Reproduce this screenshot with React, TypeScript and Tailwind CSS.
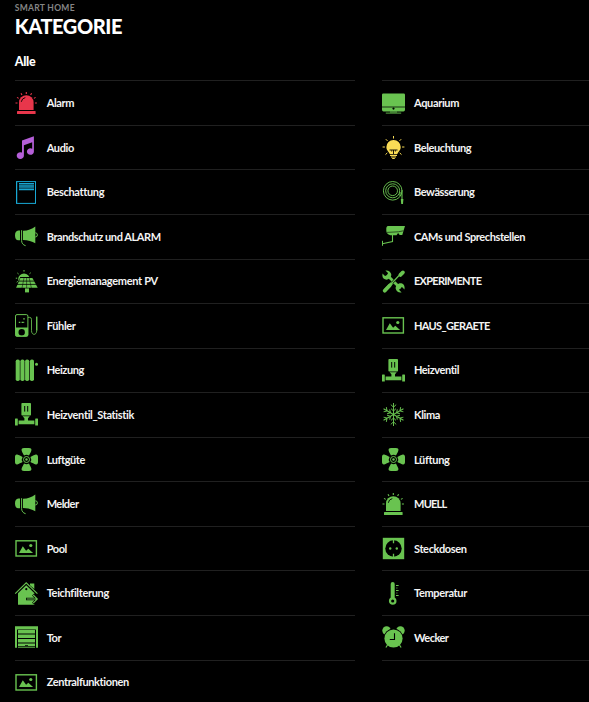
import type { ReactNode } from "react";

type Category = {
  name: string;
  icon: ReactNode;
  color?: string;
  tracking?: string;
};

const BG = "#000";

const Siren = () => (
  <>
    <path d="M4 18V10.5a7.3 7.3 0 0 1 14.6 0V18z" fill="currentColor" />
    <path d="M6.3 9.8a5 5 0 0 1 4-4.2" fill="none" stroke={BG} strokeWidth=".9" />
    <rect x="2" y="19" width="18.6" height="3" rx=".6" fill="currentColor" />
    <path
      d="M11.3 0v2M6 1.2l1 1.8M16.6 1.2l-1 1.8M2 5.4l1.7 1M20.6 5.4l-1.7 1M.5 11h2M19.9 11h2"
      stroke="currentColor"
      strokeWidth="1.1"
    />
  </>
);

const Note = () => (
  <path
    d="M7 4.6 18.9.2v15.2a3.5 3.3 0 1 1-1.7-2.7V6.2L8.9 9.2v10.2a3.6 3.4 0 1 1-1.9-2.8z"
    fill="currentColor"
  />
);

const Blind = () => (
  <>
    <rect x="1.5" y=".6" width="19" height="21.8" fill="none" stroke="currentColor" />
    <path d="M2.7 1v21" stroke="currentColor" strokeWidth=".6" opacity=".5" />
    <path d="M4 2.7h15M4 5h15M4 8.6h15" stroke="currentColor" strokeWidth="1.5" />
    <path d="M4 6.8h15" stroke="currentColor" strokeWidth="1.5" opacity=".7" />
  </>
);

const Megaphone = () => (
  <>
    <path d="M5 5.6v9.6H3.4C1 15.2 0 13 0 10.4s1-4.8 3.4-4.8z" fill="currentColor" />
    <path d="M6.6 5.2v10.4c.1 2.6 1.4 4.4 4 5.1" fill="none" stroke="currentColor" strokeWidth="1" />
    <path d="M8 5.8c5 0 9-2 12.3-4.4v16.8C17 16.4 13 15 8 15z" fill="currentColor" />
    <path d="M20.3 7.8a2 2 0 0 1 0 4.2" fill="none" stroke="currentColor" strokeWidth="1" />
  </>
);

const Solar = () => (
  <>
    <path d="M3.6 11.6a5.6 5.6 0 1 1 10.8-4.5H5.2z" fill="currentColor" />
    <path
      d="M9 0v1.6M2.4 3l1.2 1M15.7 2.8l-1.2 1M.8 8.2h1.4M1.7 12.2l1.1-.8"
      stroke="currentColor"
    />
    <path d="M5.4 8h12l5.3 9.8H1.1z" fill="currentColor" />
    <path d="M3.4 11.1h16M2 14.4h19.6" stroke={BG} strokeWidth=".8" />
    <path d="M9 8 7 18M14.2 8l2.2 10M11.6 8v10" stroke={BG} strokeWidth=".5" />
    <path d="M10 18.4h4v4h-4z" fill="currentColor" />
  </>
);

const Sensor = () => (
  <>
    <rect x=".5" y=".6" width="12.4" height="21.7" rx="1.5" fill="none" stroke="currentColor" />
    <path
      d="M.3 13.6h12.8v7.3q0 1.7-1.7 1.7H2Q.3 22.6.3 20.9zM6.7 15a3.2 3.2 0 1 0 0 6.4 3.2 3.2 0 0 0 0-6.4"
      fill="currentColor"
    />
    <path d="M3.8 8.4h1.5M6.6 8.4H8M8.2 4.8h1.6M8.2 8.4h1" stroke="currentColor" strokeWidth="1.2" />
    <path
      d="M13 3.4h1.7q1.8 0 1.8 2v11.2c0 5 5.2 5 5.2 0V3"
      fill="none"
      stroke="currentColor"
      strokeWidth=".85"
    />
    <path d="M21.7 2.5v14" stroke="currentColor" strokeWidth="1.3" />
  </>
);

const Radiator = () => (
  <g fill="currentColor">
    <rect x=".7" y=".5" width="4.1" height="21.6" rx="1.8" />
    <rect x="5.4" y=".5" width="4.1" height="21.6" rx="1.8" />
    <rect x="10.1" y=".5" width="4.1" height="21.6" rx="1.8" />
    <rect x="14.9" y=".5" width="4.1" height="21.6" rx="1.8" />
    <circle cx="21.5" cy="5.3" r="1.5" />
  </g>
);

const Valve = () => (
  <>
    <rect x="6.4" y="0" width="9.6" height="12.6" rx=".8" fill="currentColor" />
    <path d="M9.7 3v5.6M12.7 3v5.6" stroke={BG} strokeWidth="1" />
    <path d="M7.6 13.2h7.2l-1.8 2v2.2h6.4v3.8H3.6v-3.8h5.8v-2.2z" fill="currentColor" />
    <rect x="0" y="15.6" width="2.8" height="7" rx=".4" fill="currentColor" />
    <rect x="20.2" y="15.6" width="2.8" height="7" rx=".4" fill="currentColor" />
  </>
);

const Fan = () => (
  <>
    <g fill="currentColor">
      {[0, 90, 180, 270].map((angle) => (
        <path
          key={angle}
          transform={`rotate(${angle} 11.5 11.5)`}
          d="M6.6 2.2C6.4.8 7.4 0 9 0h5c1.7 0 2.7.8 2.4 2.2-.4 1.9-1.6 3.5-2.4 5.4Q11.5 6 9 7.6C8.2 5.7 7 4.1 6.6 2.2"
        />
      ))}
    </g>
    <circle cx="11.5" cy="11.5" r="3" fill="none" stroke="currentColor" />
    <circle cx="11.5" cy="11.5" r="1.2" fill="currentColor" />
  </>
);

const Picture = () => (
  <>
    <rect x="1" y="3.8" width="20.4" height="15.2" fill="none" stroke="currentColor" strokeWidth="1.4" />
    <path d="m4 16 3.8-6.7 3.3 4.4 2.2-2 4.8 4.3z" fill="currentColor" />
    <circle cx="15.8" cy="8.5" r="1.6" fill="currentColor" />
  </>
);

const House = () => (
  <>
    <path d="m.2 11.6 11-10.8L22.4 11.6" fill="none" stroke="currentColor" strokeWidth="1.1" />
    <path d="M15 1.6h4.3v5.5L15 3.3z" fill="currentColor" />
    <path d="M3 11.2 11.2 3.2 19.3 11v11.7H3z" fill="currentColor" />
    <circle cx="11.3" cy="7.2" r="1.1" fill={BG} />
    <path d="M11 17h11M18 12.6l4.4 4.4-4.4 4.6" fill="none" stroke={BG} strokeWidth="2.6" />
    <path d="M11.7 17H22M18.2 13l4.1 4-4.1 4.2" fill="none" stroke="currentColor" strokeWidth="1.1" />
  </>
);

const Garage = () => (
  <>
    <path d="M0 .2h23v21.5h-2V3.4H2v18.3H0z" fill="currentColor" />
    <path d="M3 4h17v3.5H3zM3 8.4h17V12H3zM3 13h17v3.6H3zM3 17.6h17V20h-7v-.8h-3v.8H3z" fill="currentColor" />
    <path d="M3 21.2h17" stroke="currentColor" strokeWidth="1" />
  </>
);

const Aquarium = () => (
  <>
    <path
      d="M1.3 1.4h20.4q1.3 0 1.3 1.3v11.8H0V2.7q0-1.3 1.3-1.3M0 15.6h23v2.2q0 1.6-1.6 1.6H1.6Q0 19.4 0 17.8z"
      fill="currentColor"
    />
    <path d="M0 15h23" stroke="currentColor" opacity=".5" />
    <circle cx="11.5" cy="16.6" r="1.1" fill={BG} />
    <path d="M3.8 21.1h15.4M8 20h7" stroke="currentColor" strokeWidth=".9" />
  </>
);

const Bulb = () => (
  <>
    <path
      d="M11.5 4a7 7 0 0 1 7.2 7c0 3.4-2.3 4.5-3.3 6.9H7.7c-1-2.4-3.3-3.5-3.3-6.9a7 7 0 0 1 7.1-7"
      fill="currentColor"
    />
    <path d="M7.5 14h8M11.5 14v5M9.7 14.3v1.2M13.4 14.3v1.2" stroke={BG} strokeWidth=".9" />
    <path d="M8 19.4h7M9 21h5M10.2 22.5h2.6" stroke="currentColor" strokeWidth="1.1" />
    <path
      d="M11.5 0v2.5M3.8 3.2l1.7 1.7M19.2 3.2l-1.7 1.7M.6 11h2.3M20.1 11h2.3M3.5 18.6l1.8-1.7M19.5 18.6l-1.8-1.7"
      stroke="currentColor"
      strokeWidth="1"
    />
  </>
);

const Hose = () => (
  <>
    <g fill="none" stroke="currentColor">
      <circle cx="10.7" cy="9.8" r="9.3" strokeWidth=".95" />
      <circle cx="10.7" cy="9.8" r="7" strokeWidth=".95" />
      <circle cx="10.7" cy="9.8" r="4.8" strokeWidth=".95" />
      <path d="M20 9v9.4M18 11v4" strokeWidth="1.1" />
    </g>
    <path d="M18.8 18h2.6l-.4 5h-1.8z" fill="currentColor" />
  </>
);

const Camera = () => (
  <>
    <path
      d="M5.6 1H23l-1.4 4.4-1.3 4.5h-2.6l-1.6-1.8-1.6 2.2H8.4Q4.3 9.2 4.3 5.6V3.3Q4.3 1.8 5.600 1"
      fill="currentColor"
    />
    <path d="m5 7.4 11.4-.6 5-1" fill="none" stroke={BG} strokeWidth=".6" />
    <path d="M10.5 9.5v7L.4 18.700" fill="none" stroke="currentColor" strokeWidth="1.1" />
    <path d="M.5 15.8v5" stroke="currentColor" strokeWidth="1" />
  </>
);

const Tools = () => (
  <>
    <path d="m5 5 13.6 13.6M11 12 2.6 20.6" stroke="currentColor" strokeWidth="2.8" />
    <path d="m10 13 8.3-8.8" stroke={BG} strokeWidth="2.5" />
    <path d="m9 14 10-10.5" stroke="currentColor" strokeWidth="1.2" />
    <path d="m18.4 4.9 2.5-2.5" stroke="currentColor" strokeWidth="3.8" strokeLinecap="round" />
    <path d="m2.7 20.7 5-5.2" stroke="currentColor" strokeWidth="3.8" strokeLinecap="round" />
    <path
      d="M3.4.5 6 3.1 5.2 5.3 3 6 .5 3.5C0 6.5.8 9 3.6 9.6c3 .6 6.3-2.4 5.6-5.5C8.6 1.5 6.2 0 3.4.5"
      fill="currentColor"
    />
    <path
      d="M19.6 22.4 17 19.8l.7-2.2 2.3-.7 2.5 2.5c.5-3-.4-5.5-3.1-6.1-3-.6-6.3 2.4-5.7 5.5.6 2.6 3 4.1 5.9 3.6"
      fill="currentColor"
    />
  </>
);

const Snowflake = () => (
  <g fill="none" stroke="currentColor" strokeWidth=".95">
    {[0, 60, 120, 180, 240, 300].map((angle) => (
      <path
        key={angle}
        transform={`rotate(${angle} 11.5 11.5)`}
        d="M11.5 11.5V0M8.8 1.6l2.7 2.6 2.7-2.6M9 5.6 11.5 8 14 5.6"
      />
    ))}
  </g>
);

const Socket = () => (
  <>
    <rect x=".8" y=".8" width="21.4" height="21.4" fill="currentColor" />
    <circle cx="11.5" cy="11.5" r="8.2" fill={BG} />
    <path d="M11.5 3v3.2M11.5 16.8V20" stroke="currentColor" strokeWidth="1.3" />
    <circle cx="8.2" cy="11.5" r="1.2" fill="currentColor" />
    <circle cx="14.8" cy="11.5" r="1.2" fill="currentColor" />
  </>
);

const Thermometer = () => (
  <>
    <path d="M8.7 2a2 2 0 0 1 4 0v14h-4z" fill="currentColor" />
    <circle cx="10.7" cy="19" r="2.7" fill="none" stroke="currentColor" strokeWidth="2.2" />
    <path d="M14 3.5h2.6M14 8.5h2.6M14 13.5h2.6" stroke="currentColor" strokeWidth="1" />
    <path d="M14 6h1.6M14 11h1.6" stroke="currentColor" strokeWidth=".6" />
  </>
);

const AlarmClock = () => (
  <>
    <circle cx="4.6" cy="4.6" r="4.3" fill="currentColor" />
    <circle cx="18.4" cy="4.6" r="4.3" fill="currentColor" />
    <circle cx="11.5" cy="12.5" r="10" fill={BG} />
    <path d="m5.5 19-1.6 2.5M17.5 19l1.6 2.5" stroke="currentColor" strokeWidth="1.2" />
    <circle cx="11.5" cy="12.5" r="9.1" fill="currentColor" />
    <path d="M12.5 7.3v6.2H7.8" fill="none" stroke={BG} strokeWidth="1.1" />
  </>
);

const left: Category[] = [
  { name: "Alarm", icon: <Siren />, color: "text-[#e8364b]" },
  { name: "Audio", icon: <Note />, color: "text-[#b55fd8]" },
  { name: "Beschattung", icon: <Blind />, color: "text-[#18a8d4]" },
  { name: "Brandschutz und ALARM", icon: <Megaphone />, tracking: "tracking-[-0.43px]" },
  { name: "Energiemanagement PV", icon: <Solar />, tracking: "tracking-[-0.3px]" },
  { name: "Fühler", icon: <Sensor /> },
  { name: "Heizung", icon: <Radiator />, tracking: "tracking-[-0.43px]" },
  { name: "Heizventil_Statistik", icon: <Valve /> },
  { name: "Luftgüte", icon: <Fan />, tracking: "tracking-[-0.43px]" },
  { name: "Melder", icon: <Megaphone />, tracking: "tracking-[-0.55px]" },
  { name: "Pool", icon: <Picture />, tracking: "tracking-[-0.43px]" },
  { name: "Teichfilterung", icon: <House /> },
  { name: "Tor", icon: <Garage /> },
  { name: "Zentralfunktionen", icon: <Picture />, tracking: "tracking-[-0.38px]" },
];

const right: Category[] = [
  { name: "Aquarium", icon: <Aquarium /> },
  { name: "Beleuchtung", icon: <Bulb />, color: "text-[#f9dc56]", tracking: "tracking-[-0.4px]" },
  { name: "Bewässerung", icon: <Hose />, tracking: "tracking-[-0.43px]" },
  { name: "CAMs und Sprechstellen", icon: <Camera />, tracking: "tracking-[-0.4px]" },
  { name: "EXPERIMENTE", icon: <Tools />, tracking: "tracking-[-0.72px]" },
  { name: "HAUS_GERAETE", icon: <Picture />, tracking: "tracking-[-0.65px]" },
  { name: "Heizventil", icon: <Valve />, tracking: "tracking-[-0.43px]" },
  { name: "Klima", icon: <Snowflake /> },
  { name: "Lüftung", icon: <Fan /> },
  { name: "MUELL", icon: <Siren />, tracking: "tracking-[-0.75px]" },
  { name: "Steckdosen", icon: <Socket /> },
  { name: "Temperatur", icon: <Thermometer /> },
  { name: "Wecker", icon: <AlarmClock />, tracking: "tracking-[-0.55px]" },
];

function CategoryList({ items, closed }: { items: Category[]; closed?: boolean }) {
  return (
    <ul>
      {items.map(({ name, icon, color = "text-[#69c350]", tracking = "tracking-[-0.35px]" }) => (
        <li key={name} className="flex h-[44.55px] items-center gap-[9px] border-t border-[#202020]">
          <svg viewBox="0 0 23 23" className={`size-[23px] shrink-0 overflow-visible ${color}`}>
            {icon}
          </svg>
          <span className={`whitespace-nowrap text-[11px] leading-4 font-bold text-[#f4f4f4] ${tracking}`}>
            {name}
          </span>
        </li>
      ))}
      {closed && <li className="border-t border-[#202020]" />}
    </ul>
  );
}

export default function App() {
  return (
    <main className="h-[702px] overflow-hidden bg-black pl-[14.7px] font-['Lato',sans-serif] text-white">
      <header className="pt-[3px]">
        <p className="text-[8.5px] leading-[10px] font-bold tracking-[0.3px] text-[#858585]">SMART HOME</p>
        <h1 className="text-[20px] leading-[26px] font-black tracking-[-0.4px]">KATEGORIE</h1>
      </header>
      <h2 className="mt-[15px] h-[26.4px] text-[12.5px] leading-4 font-black tracking-[-0.3px]">Alle</h2>
      <div className="grid grid-cols-[340px_1fr] gap-x-[27.3px]">
        <CategoryList items={left} />
        <CategoryList items={right} closed />
      </div>
    </main>
  );
}
